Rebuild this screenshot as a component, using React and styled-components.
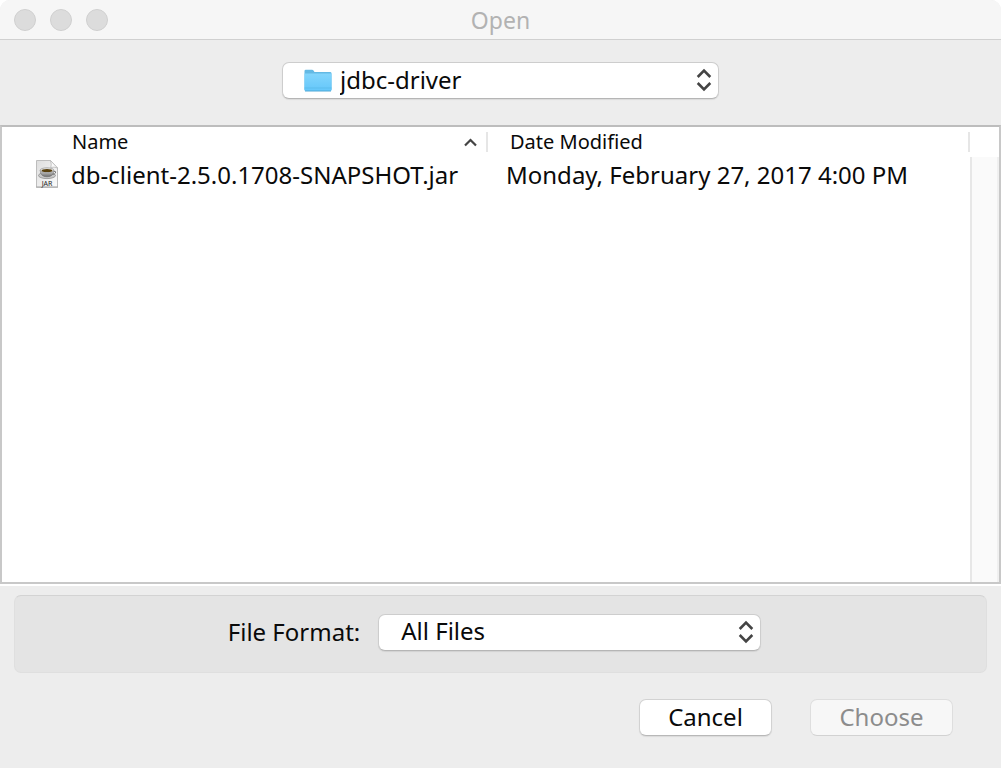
import React from 'react';
import styled, { createGlobalStyle } from 'styled-components';

const GlobalStyle = createGlobalStyle`
  *, *::before, *::after { box-sizing: border-box; }
  body {
    margin: 0;
    background: #ffffff;
    color: #0a0a0a;
    font-family: 'Lucida Grande', 'Noto Sans', 'Open Sans', sans-serif;
  }
  button, select { font: inherit; color: inherit; }
`;

const Dialog = styled.main`
  display: flex;
  flex-direction: column;
  min-height: 100vh;
  background: #ededed;
  border-radius: 10px 10px 0 0;
  overflow: hidden;
`;

const TitleBar = styled.header`
  display: grid;
  grid-template-columns: 1fr auto 1fr;
  align-items: center;
  height: 40px;
  padding: 0 14px;
  background: #f6f6f6;
  border-bottom: 1px solid #d0d0d0;
`;

const WindowControls = styled.div`
  display: flex;
  gap: 14px;
`;

const WindowButton = styled.button`
  width: 22px;
  height: 22px;
  padding: 0;
  border: 1px solid #cfcfcf;
  border-radius: 50%;
  background: #dcdcdc;
`;

const Title = styled.h1`
  margin: 0;
  font-size: 23px;
  font-weight: 400;
  line-height: 32px;
  color: #b2b2b2;
`;

const LocationBar = styled.div`
  display: flex;
  justify-content: center;
  padding: 22px 14px 26px;
`;

const SelectFrame = styled.div`
  position: relative;
  width: ${(p) => p.$width};
  max-width: 100%;
`;

const Select = styled.select`
  display: block;
  appearance: none;
  width: 100%;
  height: 37px;
  padding: 0 44px 2px ${(p) => p.$indent};
  border: 1px solid #cdcdcd;
  border-bottom-color: #b5b5b5;
  border-radius: 7px;
  background: #ffffff;
  box-shadow: 0 1px 1px rgba(0, 0, 0, 0.08);
  font-size: 24px;
  line-height: 32px;
`;

const SelectArrows = styled.svg`
  position: absolute;
  top: 6px;
  right: 7px;
  width: 16px;
  height: 24px;
  pointer-events: none;
`;

const SelectIcon = styled.svg`
  position: absolute;
  top: 7px;
  left: 22px;
  width: 28px;
  height: 23px;
  pointer-events: none;
`;

const FileBrowser = styled.section`
  display: flex;
  flex: 1;
  background: #ffffff;
  border: 2px solid #c8c8c8;
  border-top-color: #bdbdbd;
`;

const TableArea = styled.div`
  flex: 1;
  min-width: 0;
`;

const FileTable = styled.table`
  width: 100%;
  border-collapse: collapse;
  table-layout: fixed;
  text-align: left;
  white-space: nowrap;
`;

const HeaderCell = styled.th`
  width: ${(p) => p.$width};
  height: 30px;
  padding: 0 0 0 ${(p) => p.$indent};
  font-size: 20px;
  font-weight: 400;
  line-height: 28px;
`;

const HeaderContent = styled.div`
  display: flex;
  align-items: center;
  justify-content: space-between;
  height: 20px;
  padding-right: 9px;
  border-right: 2px solid #e6e6e6;
`;

const SortArrow = styled.svg`
  width: 13px;
  height: 9px;
`;

const Cell = styled.td`
  height: 36px;
  padding: 0 0 0 ${(p) => p.$indent};
  font-size: 24px;
  line-height: 36px;
`;

const FileName = styled.div`
  display: flex;
  align-items: center;
  gap: 12px;
`;

const FileIcon = styled.svg`
  flex: none;
  width: 24px;
  height: 30px;
`;

const ScrollTrack = styled.div`
  width: 29px;
  margin-top: 30px;
  background: #fafafa;
  border-left: 2px solid #e7e7e7;
  border-right: 2px solid #f0f0f0;
`;

const Footer = styled.footer`
  padding: 9px 14px 32px;
  border-top: 2px solid #ffffff;
`;

const FormatPanel = styled.div`
  display: flex;
  align-items: center;
  justify-content: center;
  gap: 18px;
  height: 78px;
  padding: 0 12px 4px 0;
  background: #e4e4e4;
  border: 1px solid #dfdfdf;
  border-top-color: #d3d3d3;
  border-radius: 7px;
`;

const FormatLabel = styled.label`
  font-size: 24px;
  line-height: 32px;
  white-space: nowrap;
`;

const Actions = styled.div`
  display: flex;
  justify-content: flex-end;
  gap: 38px;
  padding: 26px 34px 0 0;
`;

const ActionButton = styled.button`
  width: ${(p) => p.$width};
  height: 37px;
  padding: 0 0 2px;
  border: 1px solid #d2d2d2;
  border-bottom-color: #b8b8b8;
  border-radius: 7px;
  background: #ffffff;
  box-shadow: 0 1px 1px rgba(0, 0, 0, 0.08);
  font-size: 24px;
  line-height: 32px;

  &:disabled {
    color: #8c8c8c;
    background: #f7f7f7;
    border-color: #dedede;
    border-bottom-color: #d2d2d2;
    box-shadow: none;
  }
`;

const Arrows = () => (
  <SelectArrows viewBox="0 0 16 24" fill="none" stroke="#444444" strokeWidth="2.6" aria-hidden="true">
    <path d="M1.7 9 L8 2.6 L14.3 9" />
    <path d="M1.7 15 L8 21.4 L14.3 15" />
  </SelectArrows>
);

const Folder = () => (
  <SelectIcon viewBox="0 0 28 23" aria-hidden="true">
    <defs>
      <linearGradient id="folder" x1="0" y1="0" x2="0" y2="1">
        <stop offset="0" stopColor="#83d5fc" />
        <stop offset="1" stopColor="#64c7fa" />
      </linearGradient>
    </defs>
    <path d="M.5 2 Q.5.7 1.8.7 H8 Q9 .7 9.7 1.8 L10.5 3 H26 Q27.5 3 27.5 4.4 V21 H.5Z" fill="#63b9e4" />
    <path d="M.5 4.5 H27.5 V21 Q27.5 22 26.5 22 H1.5 Q.5 22 .5 21Z" fill="url(#folder)" />
    <path d="M.5 19 H27.5" stroke="#58b7e7" strokeWidth=".7" />
    <path d="M1 22 H27" stroke="#50a8d6" strokeWidth="1" />
  </SelectIcon>
);

const JarIcon = () => (
  <FileIcon viewBox="0 0 24 30" aria-hidden="true">
    <defs>
      <linearGradient id="paper" x1="0" y1="0" x2="1" y2="1">
        <stop offset="0" stopColor="#dedede" />
        <stop offset="1" stopColor="#fbfbfb" />
      </linearGradient>
      <linearGradient id="cup" x1="0" y1="0" x2="0" y2="1">
        <stop offset="0" stopColor="#d9d9d9" />
        <stop offset="1" stopColor="#6c6c6c" />
      </linearGradient>
    </defs>
    <path d="M1.5 .5 H15.5 L22.5 8 V27 H1.5Z" fill="url(#paper)" stroke="#bdbdbd" />
    <path d="M1 27.2 H23" stroke="#999999" strokeWidth=".8" />
    <path d="M15.5 .5 Q17 5 15.7 7.5 Q19 6.5 22.5 8Z" fill="#fafafa" stroke="#b3b3b3" strokeWidth=".7" />
    <ellipse cx="12" cy="15.5" rx="8.5" ry="3.1" fill="#c9c9c9" stroke="#888888" strokeWidth=".7" />
    <path d="M5.2 10.5 Q5.5 16.8 12 16.8 Q18.5 16.8 18.8 10.5Z" fill="url(#cup)" stroke="#666666" strokeWidth=".5" />
    <path d="M18.6 11.3 Q21.4 11 20.5 13 Q19.6 14.5 17.4 14.4" fill="none" stroke="#777777" />
    <ellipse cx="12" cy="10.2" rx="6.9" ry="2.4" fill="#e6e6e6" stroke="#888888" strokeWidth=".6" />
    <ellipse cx="12" cy="10.5" rx="5.4" ry="1.6" fill="#59410f" />
    <text x="12" y="25.8" textAnchor="middle" fontSize="7" fontFamily="Noto Sans, sans-serif" fill="#222222">JAR</text>
  </FileIcon>
);

const files = [
  { name: 'db-client-2.5.0.1708-SNAPSHOT.jar', modified: 'Monday, February 27, 2017 4:00 PM' },
];

export default function App() {
  return (
    <>
      <GlobalStyle />
      <Dialog>
        <TitleBar>
          <WindowControls>
            <WindowButton type="button" aria-label="Close" />
            <WindowButton type="button" aria-label="Minimize" />
            <WindowButton type="button" aria-label="Zoom" />
          </WindowControls>
          <Title>Open</Title>
        </TitleBar>
        <LocationBar>
          <SelectFrame $width="437px">
            <Select $indent="57px" aria-label="Folder">
              <option>jdbc-driver</option>
            </Select>
            <Folder />
            <Arrows />
          </SelectFrame>
        </LocationBar>
        <FileBrowser>
          <TableArea>
            <FileTable>
              <thead>
                <tr>
                  <HeaderCell $width="486px" $indent="70px" scope="col" aria-sort="ascending">
                    <HeaderContent>
                      Name
                      <SortArrow viewBox="0 0 13 9" fill="none" stroke="#444444" strokeWidth="2.2" aria-hidden="true">
                        <path d="M1 7.5 L6.5 2 L12 7.5" />
                      </SortArrow>
                    </HeaderContent>
                  </HeaderCell>
                  <HeaderCell $width="auto" $indent="22px" scope="col">
                    <HeaderContent>Date Modified</HeaderContent>
                  </HeaderCell>
                </tr>
              </thead>
              <tbody>
                {files.map((file) => (
                  <tr key={file.name}>
                    <Cell $indent="33px">
                      <FileName>
                        <JarIcon />
                        {file.name}
                      </FileName>
                    </Cell>
                    <Cell $indent="18px">{file.modified}</Cell>
                  </tr>
                ))}
              </tbody>
            </FileTable>
          </TableArea>
          <ScrollTrack />
        </FileBrowser>
        <Footer>
          <FormatPanel>
            <FormatLabel htmlFor="file-format">File Format:</FormatLabel>
            <SelectFrame $width="383px">
              <Select id="file-format" $indent="22px">
                <option>All Files</option>
              </Select>
              <Arrows />
            </SelectFrame>
          </FormatPanel>
          <Actions>
            <ActionButton type="button" $width="133px">Cancel</ActionButton>
            <ActionButton type="button" $width="143px" disabled>Choose</ActionButton>
          </Actions>
        </Footer>
      </Dialog>
    </>
  );
}
